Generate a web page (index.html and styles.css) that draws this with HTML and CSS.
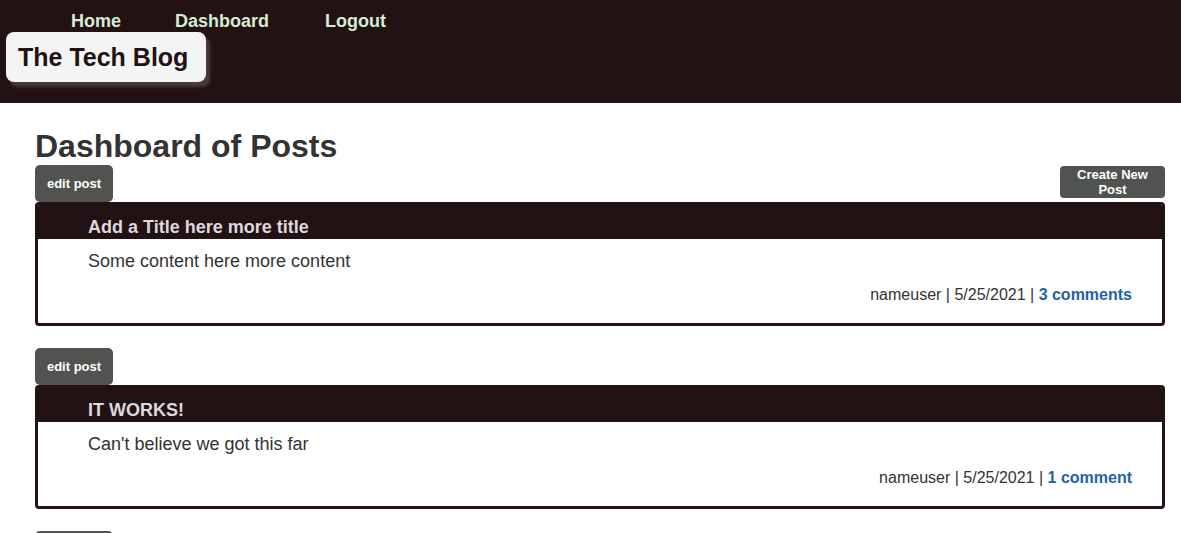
FILE: index.html
```html
<!DOCTYPE html>
<html lang="en">
<head>
<meta charset="utf-8">
<title>The Tech Blog</title>
<link rel="stylesheet" href="styles.css">
</head>
<body>
<header class="site-header">
  <nav class="nav">
    <a class="nav-link" href="#">Home</a>
    <a class="nav-link" href="#">Dashboard</a>
    <a class="nav-link" href="#">Logout</a>
  </nav>
  <div class="logo">The Tech Blog</div>
</header>
<main class="main">
  <h1 class="page-title">Dashboard of Posts</h1>
  <div class="post-group">
    <div class="btn-row">
      <button class="btn btn-edit">edit post</button>
      <button class="btn btn-create">Create New Post</button>
    </div>
    <article class="post">
      <h2 class="post-title">Add a Title here more title</h2>
      <p class="post-content">Some content here more content</p>
      <p class="post-meta">nameuser | 5/25/2021 | <a class="comments" href="#">3 comments</a></p>
    </article>
  </div>
  <div class="post-group">
    <div class="btn-row">
      <button class="btn btn-edit">edit post</button>
    </div>
    <article class="post">
      <h2 class="post-title">IT WORKS!</h2>
      <p class="post-content">Can't believe we got this far</p>
      <p class="post-meta">nameuser | 5/25/2021 | <a class="comments" href="#">1 comment</a></p>
    </article>
  </div>
  <div class="post-group">
    <div class="btn-row">
      <button class="btn btn-edit">edit post</button>
    </div>
    <article class="post">
      <h2 class="post-title">Another post</h2>
      <p class="post-content">More content</p>
      <p class="post-meta">nameuser | 5/25/2021 | <a class="comments" href="#">0 comments</a></p>
    </article>
  </div>
</main>
</body>
</html>
```

FILE: styles.css
```css
* { box-sizing: border-box; }
html, body { margin: 0; padding: 0; background: #ffffff; }
body {
  font-family: "Liberation Sans", Arial, sans-serif;
  color: #333333;
}
.site-header {
  background: #231213;
  height: 103px;
  padding-top: 11px;
}
.nav {
  display: flex;
  padding-left: 44px;
  height: 21px;
}
.nav-link {
  color: #d6ecd3;
  font-weight: bold;
  font-size: 18px;
  line-height: 21px;
  text-decoration: none;
  padding: 0 27px;
}
.nav-link:last-child { margin-left: 2px; }
.logo {
  margin: 0 0 0 6px;
  width: 200px;
  height: 50px;
  background: #f4f4f4;
  border-radius: 8px;
  box-shadow: 4px 5px 3px #4a3a3a;
  color: #231213;
  font-weight: bold;
  font-size: 25px;
  line-height: 50px;
  padding-left: 12px;
}
.main {
  padding: 0 16px 0 35px;
}
.page-title {
  margin: 24px 0 0 0;
  font-size: 32px;
  line-height: 38px;
  font-weight: bold;
  color: #333333;
}
.post-group { margin-bottom: 22px; }
.btn-row {
  display: flex;
  justify-content: space-between;
  align-items: flex-start;
}
.btn {
  border: none;
  background: #50534f;
  color: #ffffff;
  font-family: "Liberation Sans", Arial, sans-serif;
  font-weight: bold;
  font-size: 13px;
  border-radius: 5px;
  cursor: pointer;
}
.btn-edit {
  width: 78px;
  height: 37px;
  padding: 0;
}
.btn-create {
  width: 105px;
  height: 32px;
  margin-top: 1px;
  padding: 0 10px;
  line-height: 15px;
  border-radius: 4px;
}
.post {
  border: 3px solid #231213;
  border-radius: 4px;
  overflow: hidden;
}
.post-title {
  margin: 0;
  background: #231213;
  color: #ddd7df;
  font-size: 18px;
  line-height: 21px;
  font-weight: bold;
  padding: 12px 50px 1px;
}
.post-content {
  margin: 0;
  font-size: 18px;
  line-height: 21px;
  padding: 12px 50px 0;
  color: #333333;
}
.post-meta {
  margin: 0;
  text-align: right;
  font-size: 16px;
  line-height: 18px;
  padding: 14px 30px 19px;
  color: #333333;
}
.comments {
  color: #2460a7;
  font-weight: bold;
  text-decoration: none;
}
```
